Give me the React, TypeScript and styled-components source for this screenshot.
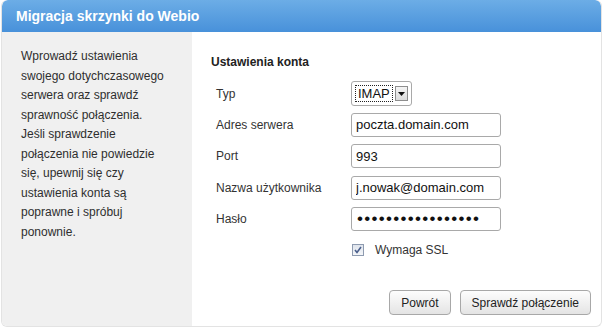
import styled, { createGlobalStyle } from "styled-components";

const GlobalStyle = createGlobalStyle`
  html, body {
    margin: 0;
    padding: 0;
    background: #ffffff;
  }
  body {
    font-family: "Liberation Sans", Arial, sans-serif;
    font-size: 12px;
    color: #333;
  }
`;

const Dialog = styled.div`
  margin-left: 1px;
  width: 601px;
  height: 327px;
  box-sizing: border-box;
  border: 1px solid #e3e3e3;
  border-top: none;
  border-radius: 6px;
  overflow: hidden;
  display: flex;
  flex-direction: column;
  background: #fff;
`;

const Header = styled.div`
  height: 32px;
  flex: 0 0 32px;
  display: flex;
  align-items: center;
  padding-left: 14px;
  background: linear-gradient(#6cade6, #4891da);
  border-radius: 6px 6px 0 0;
  color: #fff;
  font-size: 14px;
  font-weight: bold;
`;

const Body = styled.div`
  flex: 1;
  display: flex;
`;

const Sidebar = styled.div`
  width: 190px;
  box-sizing: border-box;
  padding: 15px 10px 0 19px;
  background: #f0f0f0;
  color: #2e2e2e;
  font-size: 12px;
  line-height: 19.5px;
`;

const Line = styled.div`
  white-space: nowrap;
`;

const Content = styled.div`
  flex: 1;
  display: flex;
  flex-direction: column;
  padding: 23px 10px 11px 19px;
`;

const SectionTitle = styled.div`
  font-weight: bold;
  color: #222;
  line-height: 15px;
  margin-bottom: 11px;
`;

const Form = styled.div`
  display: grid;
  grid-template-columns: 140px 150px;
  grid-auto-rows: 25px;
  row-gap: 6.4px;
  align-items: center;
`;

const Label = styled.label`
  padding-left: 5px;
  color: #333;
`;

const TextInput = styled.input`
  box-sizing: border-box;
  width: 150px;
  height: 24px;
  margin: 0;
  padding: 0 4px;
  border: 1px solid #a9a9a9;
  border-radius: 3px;
  font-family: "Liberation Sans", Arial, sans-serif;
  font-size: 13px;
  color: #111;
  background: #fff;
  outline: none;
`;

const PasswordInput = styled(TextInput)`
  font-size: 17px;
  letter-spacing: 1.3px;
  padding-left: 5px;
`;

const Select = styled.div`
  box-sizing: border-box;
  width: 61px;
  height: 25px;
  display: flex;
  align-items: center;
  gap: 2px;
  padding: 0 3px;
  border: 1px solid #a9a9a9;
  border-radius: 3px;
  background: #fff;
`;

const SelectValue = styled.span`
  box-sizing: border-box;
  height: 17px;
  padding: 0 2px;
  display: flex;
  align-items: center;
  border: 1px dotted #222;
  font-size: 13px;
  color: #111;
`;

const SelectArrow = styled.span`
  width: 14px;
  height: 15px;
  box-sizing: border-box;
  display: flex;
  align-items: center;
  justify-content: center;
  border: 1px solid #8e8e8e;
  background: linear-gradient(#f4f4f4, #dcdcdc);
`;

const CheckRow = styled.div`
  grid-column: 2;
  display: flex;
  align-items: center;
  gap: 11px;
  padding-left: 1px;
`;

const CheckBox = styled.span`
  width: 12px;
  height: 12px;
  box-sizing: border-box;
  display: flex;
  align-items: center;
  justify-content: center;
  border: 1px solid #8e9bb0;
  background: linear-gradient(#dfe4ec, #f4f6f9);
`;

const Actions = styled.div`
  margin-top: auto;
  display: flex;
  justify-content: flex-end;
  gap: 9px;
`;

const Button = styled.button<{ wide?: boolean }>`
  height: 25px;
  box-sizing: border-box;
  padding: 0 ${(p) => (p.wide ? 11 : 11)}px;
  border: 1px solid #a8a8a8;
  border-radius: 4px;
  background: linear-gradient(#fdfdfd, #e4e4e4);
  font-family: "Liberation Sans", Arial, sans-serif;
  font-size: 12px;
  color: #222;
`;

const intro = [
  "Wprowadź ustawienia",
  "swojego dotychczasowego",
  "serwera oraz sprawdź",
  "sprawność połączenia.",
  "Jeśli sprawdzenie",
  "połączenia nie powiedzie",
  "się, upewnij się czy",
  "ustawienia konta są",
  "poprawne i spróbuj",
  "ponownie.",
];

function App() {
  return (
    <>
      <GlobalStyle />
      <Dialog>
        <Header>Migracja skrzynki do Webio</Header>
        <Body>
          <Sidebar>
            {intro.map((line) => (
              <Line key={line}>{line}</Line>
            ))}
          </Sidebar>
          <Content>
            <SectionTitle>Ustawienia konta</SectionTitle>
            <Form>
              <Label>Typ</Label>
              <Select>
                <SelectValue>IMAP</SelectValue>
                <SelectArrow>
                  <svg width="7" height="4" viewBox="0 0 7 4">
                    <path d="M0 0h7L3.5 4z" fill="#111" />
                  </svg>
                </SelectArrow>
              </Select>
              <Label>Adres serwera</Label>
              <TextInput defaultValue="poczta.domain.com" />
              <Label>Port</Label>
              <TextInput defaultValue="993" />
              <Label>Nazwa użytkownika</Label>
              <TextInput defaultValue="j.nowak@domain.com" />
              <Label>Hasło</Label>
              <PasswordInput type="password" defaultValue="xxxxxxxxxxxxxxxxx" />
              <CheckRow>
                <CheckBox>
                  <svg width="8" height="8" viewBox="0 0 8 8">
                    <path
                      d="M1 4l2 2.5L7 1"
                      fill="none"
                      stroke="#4a5f8c"
                      strokeWidth="1.6"
                    />
                  </svg>
                </CheckBox>
                <span>Wymaga SSL</span>
              </CheckRow>
            </Form>
            <Actions>
              <Button>Powrót</Button>
              <Button wide>Sprawdź połączenie</Button>
            </Actions>
          </Content>
        </Body>
      </Dialog>
    </>
  );
}

export default App;
